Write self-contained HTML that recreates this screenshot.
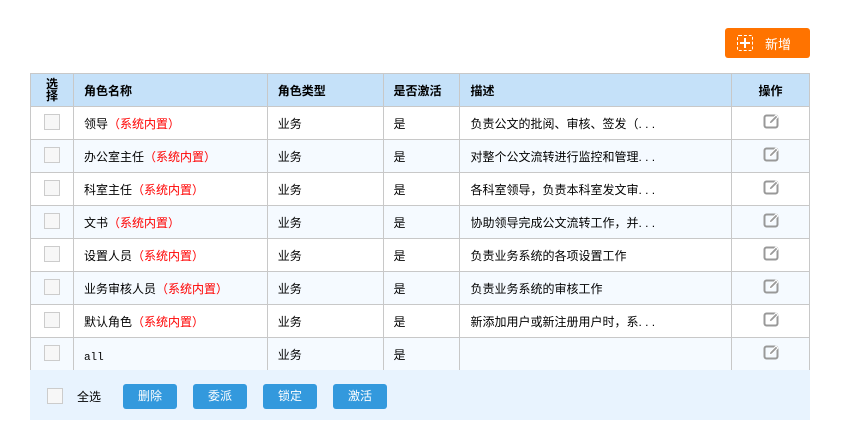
<!DOCTYPE html>
<html><head><meta charset="utf-8"><style>
*{margin:0;padding:0;box-sizing:border-box}
body{width:860px;height:448px;background:#fff;font-family:"Liberation Sans","Noto Sans CJK SC",sans-serif;font-size:12px;color:#000;position:relative;overflow:hidden}
.add{position:absolute;left:725px;top:28px;width:85px;height:30px;background:#ff7300;border-radius:3px;color:#fff;font-size:13px}
.add .ic{position:absolute;left:12px;top:7px;width:16px;height:16px;border:1px dashed #fff;border-radius:2px}
.add .ic:before{content:"";position:absolute;left:6px;top:2px;width:2px;height:10px;background:#fff}
.add .ic:after{content:"";position:absolute;left:2px;top:6px;width:10px;height:2px;background:#fff}
.add span{position:absolute;left:40px;top:6px}
table{position:absolute;left:30px;top:73px;border-collapse:collapse;width:780px}
td,th{border:1px solid #c8c8c8;height:33px;padding:0 0 0 10px;text-align:left;vertical-align:middle}
th{background:#c5e1f9;font-weight:bold;font-size:12px}
tr:nth-child(odd) td{background:#f5faff}
.r{color:#f00}
.cb{display:inline-block;width:16px;height:16px;border:1px solid #ccc;background:#f7f7f7;vertical-align:middle;margin-top:-4px}
.c0{padding:0;text-align:center}
.c0 svg{display:block;margin:-4px auto 0}
.foot{position:absolute;left:30px;top:370px;width:780px;height:50px;background:#e8f3fe}
.btn{position:absolute;top:14px;width:54px;height:25px;background:#3399dd;color:#fff;border-radius:3px;text-align:center;line-height:25px}
.mono{font-family:"Liberation Mono",monospace;font-size:11px;position:relative;top:2px}
</style></head><body>
<svg width="0" height="0" style="position:absolute"><defs><g id="ed"><rect x="1.5" y="2.5" width="13" height="12" rx="2" fill="none" stroke="#999" stroke-width="2"/><path d="M6 11 L7 8 L13 2 L15 4 L9 10 Z" fill="#999" stroke="#fff" stroke-width="1"/></g></defs></svg>
<div class="add"><div class="ic"></div><span>新增</span></div>
<table>
<colgroup><col style="width:43px"><col style="width:194px"><col style="width:116px"><col style="width:77px"><col style="width:272px"><col style="width:78px"></colgroup>
<tr><th class="c0" style="line-height:12px">选<br>择</th><th>角色名称</th><th>角色类型</th><th>是否激活</th><th>描述</th><th class="c0">操作</th></tr>
<tr><td class="c0"><span class="cb"></span></td><td>领导<span class="r">（系统内置）</span></td><td>业务</td><td>是</td><td>负责公文的批阅、审核、签发（. . .</td><td class="c0"><svg width="16" height="16"><use href="#ed"/></svg></td></tr>
<tr><td class="c0"><span class="cb"></span></td><td>办公室主任<span class="r">（系统内置）</span></td><td>业务</td><td>是</td><td>对整个公文流转进行监控和管理. . .</td><td class="c0"><svg width="16" height="16"><use href="#ed"/></svg></td></tr>
<tr><td class="c0"><span class="cb"></span></td><td>科室主任<span class="r">（系统内置）</span></td><td>业务</td><td>是</td><td>各科室领导，负责本科室发文审. . .</td><td class="c0"><svg width="16" height="16"><use href="#ed"/></svg></td></tr>
<tr><td class="c0"><span class="cb"></span></td><td>文书<span class="r">（系统内置）</span></td><td>业务</td><td>是</td><td>协助领导完成公文流转工作，并. . .</td><td class="c0"><svg width="16" height="16"><use href="#ed"/></svg></td></tr>
<tr><td class="c0"><span class="cb"></span></td><td>设置人员<span class="r">（系统内置）</span></td><td>业务</td><td>是</td><td>负责业务系统的各项设置工作</td><td class="c0"><svg width="16" height="16"><use href="#ed"/></svg></td></tr>
<tr><td class="c0"><span class="cb"></span></td><td>业务审核人员<span class="r">（系统内置）</span></td><td>业务</td><td>是</td><td>负责业务系统的审核工作</td><td class="c0"><svg width="16" height="16"><use href="#ed"/></svg></td></tr>
<tr><td class="c0"><span class="cb"></span></td><td>默认角色<span class="r">（系统内置）</span></td><td>业务</td><td>是</td><td>新添加用户或新注册用户时，系. . .</td><td class="c0"><svg width="16" height="16"><use href="#ed"/></svg></td></tr>
<tr><td class="c0"><span class="cb"></span></td><td><span class="mono">all</span></td><td>业务</td><td>是</td><td></td><td class="c0"><svg width="16" height="16"><use href="#ed"/></svg></td></tr>
</table>
<div class="foot">
<span class="cb" style="position:absolute;left:17px;top:18px;margin:0"></span>
<span style="position:absolute;left:47px;top:18px">全选</span>
<div class="btn" style="left:93px">删除</div>
<div class="btn" style="left:163px">委派</div>
<div class="btn" style="left:233px">锁定</div>
<div class="btn" style="left:303px">激活</div>
</div>
</body></html>
